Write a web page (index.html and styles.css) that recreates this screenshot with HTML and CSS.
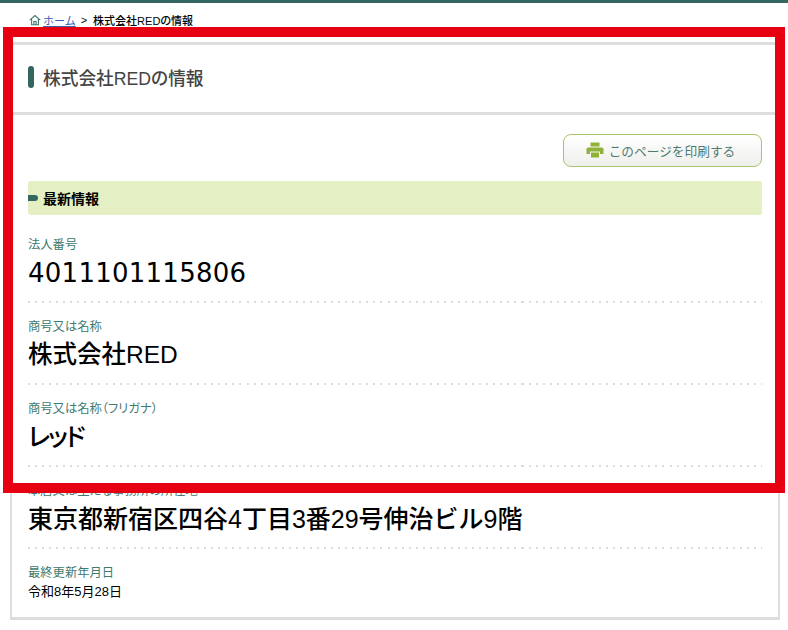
FILE: index.html
```html
<!DOCTYPE html>
<html lang="ja">
<head>
    <meta charset="UTF-8">
    <meta name="viewport" content="width=device-width, initial-scale=1.0">
    <title>株式会社REDの情報</title>
    <link rel="stylesheet" href="styles.css">
</head>
<body>

<div class="top-bar"></div>

<div class="breadcrumb">
    <svg class="home-icon" viewBox="0 0 12 12" width="12" height="12">
        <path d="M0.8 6.2 L6 1.5 L11.2 6.2 M2.6 5 V10.8 H9.4 V5 M4.9 10.8 V7.5 H7.1 V10.8" fill="none" stroke="#3f7a6e" stroke-width="1.1"/>
    </svg>
    <a href="#">ホーム</a>
    <span class="sep">&gt;</span>
    <span>株式会社REDの情報</span>
</div>

<div class="panel">
    <div class="panel-title">
        <span class="title-mark"></span>
        <h1>株式会社REDの情報</h1>
    </div>

    <div class="panel-body">
        <div class="print-row">
            <a class="print-btn" href="#">
                <svg viewBox="0 0 18 16" width="18" height="16">
                    <path d="M4.5 0.5 H13.5 V4.5 H4.5 Z" fill="#8fb339"/>
                    <path d="M2 5.5 H16 A1.5 1.5 0 0 1 17.5 7 V12 H14 V9.5 H4 V12 H0.5 V7 A1.5 1.5 0 0 1 2 5.5 Z" fill="#8fb339"/>
                    <path d="M5 10.5 H13 V15.5 H5 Z" fill="#8fb339"/>
                </svg>
                このページを印刷する
            </a>
        </div>

        <h2 class="section-head"><span class="section-mark"></span>最新情報</h2>

        <div class="info-row first">
            <div class="info-label">法人番号</div>
            <div class="info-value number">4011101115806</div>
        </div>
        <div class="info-row">
            <div class="info-label">商号又は名称</div>
            <div class="info-value name">株式会社RED</div>
        </div>
        <div class="info-row">
            <div class="info-label">商号又は名称（フリガナ）</div>
            <div class="info-value kana">レッド</div>
        </div>
        <div class="info-row">
            <div class="info-label">本店又は主たる事務所の所在地</div>
            <div class="info-value">東京都新宿区四谷4丁目3番29号伸治ビル9階</div>
        </div>
        <div class="info-row last">
            <div class="info-label">最終更新年月日</div>
            <div class="info-date">令和8年5月28日</div>
        </div>
    </div>
</div>

<div class="highlight"></div>

</body>
</html>
```

FILE: styles.css
```css
html, body {
    height: 630px;
    overflow: hidden;
}
body {
    margin: 0;
    background-color: #fff;
    color: #000;
    font-family: "Liberation Sans", "Noto Sans CJK JP", sans-serif;
    font-feature-settings: "palt";
}
.top-bar {
    height: 3px;
    background-color: #33665f;
}
.breadcrumb {
    display: flex;
    align-items: center;
    height: 39px;
    padding: 0 0 5px 29px;
    box-sizing: border-box;
    font-size: 11px;
    font-weight: 500;
}
.breadcrumb a {
    margin-left: 2px;
    color: #3a5fb0;
    font-weight: 400;
    font-feature-settings: normal;
}
.sep {
    margin: 0 6px 0 5px;
}
.panel {
    margin: 0 8px 0 10px;
    border: solid #dddddd;
    border-width: 3px 2px;
}
.panel-title {
    display: flex;
    align-items: center;
    gap: 9px;
    height: 67px;
    padding-left: 16px;
    border-bottom: 3px solid #dddddd;
}
.title-mark {
    width: 6px;
    height: 22px;
    margin-bottom: 3px;
    border-radius: 3px;
    background-color: #33665f;
}
.panel-title h1 {
    margin: 0 0 4px;
    font-size: 17.7px;
    font-weight: 500;
    color: #444;
}
.panel-body {
    padding: 19px 16px 0;
}
.print-row {
    display: flex;
    justify-content: flex-end;
}
.print-btn {
    display: flex;
    align-items: center;
    justify-content: center;
    gap: 5px;
    width: 199px;
    height: 33px;
    padding: 0 4px 1px 0;
    box-sizing: border-box;
    border: 1.5px solid #a9c46c;
    border-radius: 8px;
    background: linear-gradient(to bottom, #ffffff, #eef0ec);
    color: #4f7a70;
    font-size: 12.7px;
    font-feature-settings: normal;
    text-decoration: none;
}
.section-head {
    display: flex;
    align-items: center;
    gap: 5px;
    height: 34px;
    margin: 14px 0 0;
    border-radius: 3px;
    background-color: #e4f0c4;
    font-size: 14px;
    font-weight: 700;
}
.section-mark {
    width: 10px;
    height: 6px;
    border-radius: 0 3px 3px 0;
    background-color: #33665f;
}
.info-row {
    height: 82px;
    box-sizing: border-box;
    padding-top: 15px;
    background: repeating-linear-gradient(to right, #dcdcdc 0 2px, transparent 2px 7.05px) left bottom / 100% 2px no-repeat;
}
.info-row.first {
    height: 88px;
    padding-top: 21px;
}
.info-label {
    height: 20px;
    font-size: 12.3px;
    line-height: 18px;
    color: #3f7a6e;
}
.info-value {
    font-size: 25px;
    line-height: 34px;
    font-weight: 500;
    font-feature-settings: normal;
}
.number {
    font-family: "DejaVu Sans", sans-serif;
    font-size: 26px;
    font-weight: 400;
    line-height: 34px;
    letter-spacing: 0.25px;
}
.name {
    font-size: 24.5px;
}
.kana {
    font-feature-settings: "palt";
    letter-spacing: -2px;
}
.info-row.last {
    height: 68px;
    background: none;
    padding-top: 15px;
}
.info-date {
    font-size: 13px;
    line-height: 16px;
}
/* red marker drawn over the page */
.highlight {
    position: absolute;
    left: 3px;
    top: 27px;
    width: 762px;
    height: 446px;
    border: 10px solid #e60012;
}
```
